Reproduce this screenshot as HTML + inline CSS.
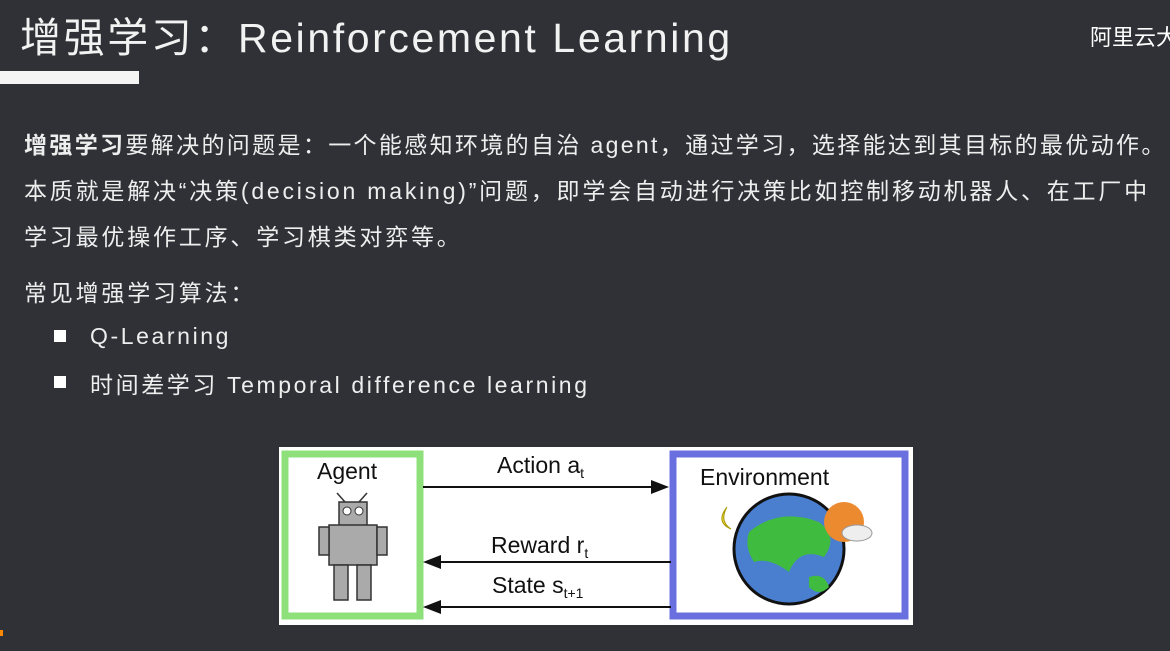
<!DOCTYPE html>
<html><head><meta charset="utf-8"><style>
body{margin:0;width:1170px;height:651px;background:#2f3136;overflow:hidden;position:relative;font-family:"Liberation Sans","Noto Sans CJK SC",sans-serif;color:#fff}
.t{position:absolute;white-space:nowrap}
</style></head><body>
<div class="t" style="left:20px;top:4px;font-size:41px;letter-spacing:2.6px;color:#f2f2f2">增强学习：Reinforcement Learning</div>
<div class="t" style="left:1090px;top:20px;font-size:22px">阿里云大</div>
<div style="position:absolute;left:0;top:71px;width:139px;height:13px;background:#f4f4f4"></div>
<div class="t" style="left:24px;top:122px;font-size:23px;letter-spacing:2.8px;line-height:46px;color:#eee"><span style="letter-spacing:2.35px"><b>增强学习</b>要解决的问题是：一个能感知环境的自治 agent，通过学习，选择能达到其目标的最优动作。</span><br>本质就是解决“决策(decision making)”问题，即学会自动进行决策比如控制移动机器人、在工厂中<br>学习最优操作工序、学习棋类对弈等。</div>
<div class="t" style="left:24px;top:274px;font-size:23px;letter-spacing:2.8px;color:#eee">常见增强学习算法：</div>
<div style="position:absolute;left:54px;top:330px;width:12px;height:12px;background:#fff"></div>
<div class="t" style="left:90px;top:323px;font-size:23px;letter-spacing:2.6px;color:#eee">Q-Learning</div>
<div style="position:absolute;left:54px;top:376px;width:12px;height:12px;background:#fff"></div>
<div class="t" style="left:90px;top:366px;font-size:23px;letter-spacing:2.6px;color:#eee">时间差学习 Temporal difference learning</div>
<svg style="position:absolute;left:279px;top:447px" width="634" height="178" viewBox="0 0 634 178">
<rect width="634" height="178" fill="#fff"/>
<rect x="6" y="7" width="135" height="162" fill="none" stroke="#8de07a" stroke-width="7"/>
<rect x="394" y="7" width="232" height="162" fill="none" stroke="#6a6fe0" stroke-width="7"/>
<g font-family="Liberation Sans" fill="#111" font-size="23">
<text x="38" y="32">Agent</text>
<text x="218" y="26">Action a<tspan font-size="14" dy="5">t</tspan></text>
<text x="421" y="38">Environment</text>
<text x="212" y="106">Reward r<tspan font-size="14" dy="5">t</tspan></text>
<text x="213" y="146">State s<tspan font-size="14" dy="5">t+1</tspan></text>
</g>
<g stroke="#111" stroke-width="2"><line x1="144" y1="40" x2="378" y2="40"/><line x1="160" y1="115" x2="392" y2="115"/><line x1="160" y1="160" x2="392" y2="160"/></g>
<polygon points="390,40 372,33 372,47" fill="#111"/>
<polygon points="144,115 162,108 162,122" fill="#111"/>
<polygon points="144,160 162,153 162,167" fill="#111"/>
<g stroke="#333" stroke-width="1.5">
<rect x="60" y="55" width="28" height="24" fill="#aaa"/><rect x="50" y="78" width="48" height="40" fill="#aaa"/>
<rect x="40" y="80" width="10" height="28" fill="#aaa"/><rect x="98" y="80" width="10" height="28" fill="#aaa"/>
<rect x="55" y="118" width="14" height="35" fill="#aaa"/><rect x="78" y="118" width="14" height="35" fill="#aaa"/>
<line x1="66" y1="55" x2="58" y2="46"/><line x1="80" y1="55" x2="88" y2="46"/></g>
<circle cx="68" cy="64" r="4" fill="#fff" stroke="#333"/><circle cx="80" cy="64" r="4" fill="#fff" stroke="#333"/>
<circle cx="510" cy="102" r="55" fill="#4a7fd0" stroke="#111" stroke-width="3"/>
<path d="M470 85 Q500 60 540 75 Q560 90 545 110 Q520 100 510 125 Q490 110 475 115 Q465 100 470 85Z" fill="#3fbb3f"/>
<path d="M530 130 Q545 125 550 140 Q540 150 530 140Z" fill="#3fbb3f"/>
<circle cx="565" cy="75" r="20" fill="#ec8a30"/>
<ellipse cx="578" cy="86" rx="15" ry="8" fill="#eee" stroke="#999"/>
<path d="M448 60 Q436 75 452 82 Q440 74 448 60Z" fill="#e8d84a" stroke="#a90"/>
</svg>
<div style="position:absolute;left:0;top:630px;width:3px;height:6px;background:#f80"></div>
</body></html>
